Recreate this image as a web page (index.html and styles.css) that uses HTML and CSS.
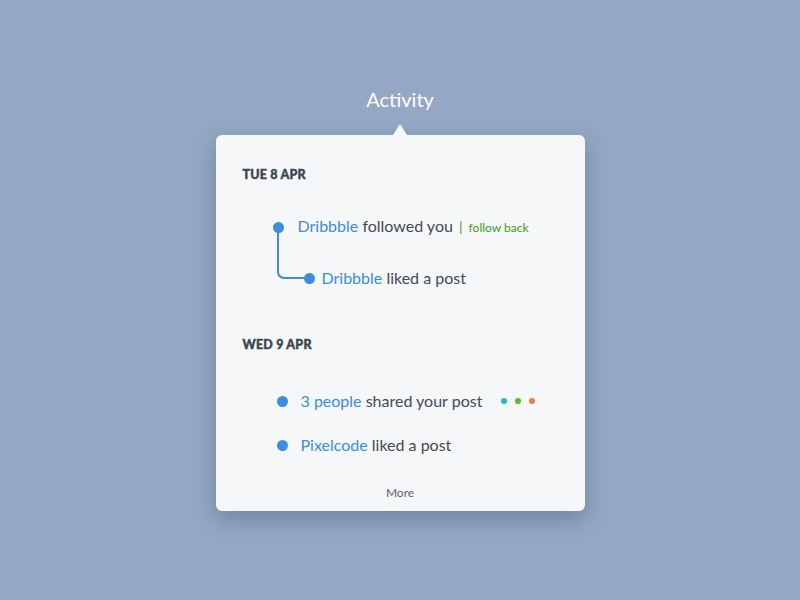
FILE: index.html
```html
<!DOCTYPE html>
<html>
<head>
<meta charset="utf-8"/>
<title>Activity</title>
<link rel="stylesheet" href="styles.css">
</head>
<body>
    <h1 id="title">Activity</h1>
    <div id="panel">
        <div class="day">
            <h2 class="day-label">TUE 8 APR</h2>
            <div class="item item-first">
                <span class="dot"></span>
                <p><a href="#">Dribbble</a> followed you <span class="sep">|</span> <a class="follow" href="#">follow back</a></p>
            </div>
            <div class="item item-reply">
                <span class="dot"></span>
                <p><a href="#">Dribbble</a> liked a post</p>
            </div>
        </div>
        <div class="day">
            <h2 class="day-label">WED 9 APR</h2>
            <div class="item item-plain">
                <span class="dot"></span>
                <p><a href="#">3 people</a> shared your post</p>
                <span class="people">
                    <span class="mini cyan"></span>
                    <span class="mini green"></span>
                    <span class="mini orange"></span>
                </span>
            </div>
            <div class="item item-plain item-last">
                <span class="dot"></span>
                <p><a href="#">Pixelcode</a> liked a post</p>
            </div>
        </div>
        <a id="more" href="#">More</a>
    </div>
</body>
</html>
```

FILE: styles.css
```css
body {
    padding: 0 0 60px;
    margin: 0;
    background: #94a8c3;
    font-family: Lato, "Open Sans", arial, sans-serif;
    color: #414b55;
}
a {
    color: #3b8de0;
    text-decoration: none;
}
p {
    margin: 0;
}
#title {
    margin: 87px 0 24px;
    font-size: 20px;
    line-height: 24px;
    font-weight: normal;
    text-align: center;
    color: #ffffff;
}
#panel {
    position: relative;
    width: 369px;
    box-sizing: border-box;
    margin: 0 auto;
    padding: 32px 27px 10px;
    background: #f6f7f9;
    border-radius: 6px;
    box-shadow: 0 8px 22px rgba(45, 62, 92, 0.35);
}
#panel:before {
    content: "";
    position: absolute;
    top: -11px;
    left: 50%;
    margin-left: -7px;
    border-left: 7px solid transparent;
    border-right: 7px solid transparent;
    border-bottom: 11px solid #f6f7f9;
}
.day-label {
    margin: 0;
    font-size: 12.5px;
    line-height: 16px;
    font-weight: 900;
    letter-spacing: 0.2px;
    color: #3b4650;
    -webkit-text-stroke: 0.4px #3b4650;
}
.day + .day {
    margin-top: 49px;
}
.item {
    display: flex;
    align-items: center;
    height: 20px;
    font-size: 16px;
    line-height: 20px;
}
.dot {
    flex: none;
    width: 11px;
    height: 11px;
    border-radius: 50%;
    background: #3b8de0;
}
.item-first {
    margin: 34px 0 0 30px;
}
.item-first .dot {
    margin-right: 14px;
}
.item-reply {
    position: relative;
    margin: 31px 0 0 61px;
}
.item-reply .dot {
    margin-right: 7px;
}
/* elbow line from the first dot down to the reply */
.item-reply:before {
    content: "";
    position: absolute;
    left: -27px;
    bottom: 9px;
    width: 25px;
    height: 48px;
    border-left: 2px solid #3b8de0;
    border-bottom: 2px solid #3b8de0;
    border-bottom-left-radius: 7px;
}
.item-plain {
    margin: 38px 0 0 34px;
}
.item-plain .dot {
    margin-right: 13px;
}
.item-last {
    margin-top: 24px;
}
.sep {
    color: #3d9b22;
    font-size: 14px;
    margin: 0 2px;
}
.follow {
    color: #3d9b22;
    font-size: 12px;
}
.people {
    display: flex;
    gap: 8px;
    margin-left: 19px;
}
.mini {
    width: 6px;
    height: 6px;
    border-radius: 50%;
}
.cyan {
    background: #1fb8cc;
}
.green {
    background: #57c21f;
}
.orange {
    background: #ef7b3a;
}
#more {
    display: block;
    margin-top: 30px;
    font-size: 12px;
    line-height: 16px;
    text-align: center;
    color: #5a6168;
}
```
